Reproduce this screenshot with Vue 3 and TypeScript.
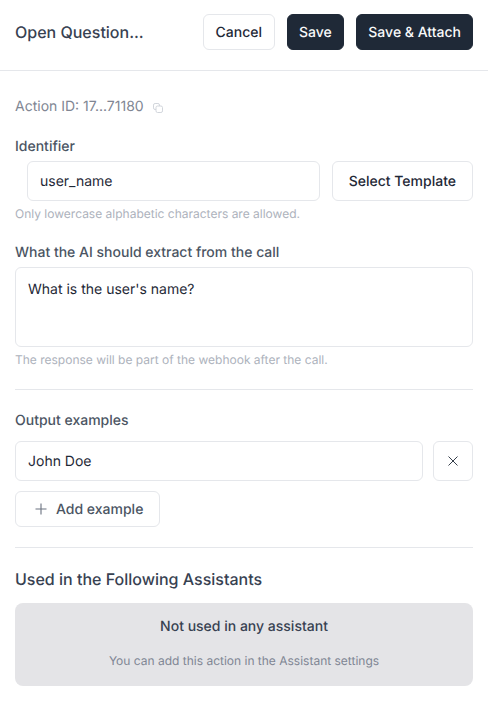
<script setup lang="ts">
const title: string = 'Open Question...'
</script>

<template>
  <div class="page">
    <header class="head">
      <div class="title">{{ title }}</div>
      <div class="actions">
        <button class="btn outline mid">Cancel</button>
        <button class="btn dark mid">Save</button>
        <button class="btn dark">Save &amp; Attach</button>
      </div>
    </header>
    <main class="body">
      <div class="action-id">
        <span>Action ID: 17...71180</span>
        <svg class="copy" width="10" height="10" viewBox="0 0 10 10" fill="none" stroke="#d1d5db" stroke-width="1">
          <rect x="0.5" y="0.5" width="6" height="6" rx="1.6" />
          <rect x="3" y="3" width="6.5" height="6.5" rx="1.6" fill="#fff" />
        </svg>
      </div>

      <label class="label id-label">Identifier</label>
      <div class="id-row">
        <div class="field grow">user_name</div>
        <button class="btn outline tall tmpl">Select Template</button>
      </div>
      <p class="hint id-hint">Only lowercase alphabetic characters are allowed.</p>

      <label class="label extract">What the AI should extract from the call</label>
      <div class="field area">What is the user's name?</div>
      <p class="hint">The response will be part of the webhook after the call.</p>

      <hr class="rule first" />

      <label class="label">Output examples</label>
      <div class="ex-row">
        <div class="field grow">John Doe</div>
        <button class="icon-btn" aria-label="Remove">
          <svg width="16" height="16" viewBox="0 0 16 16" fill="none" stroke="#1f2937" stroke-width="0.9">
            <path d="M3.5 3.5 12.5 12.5M12.5 3.5 3.5 12.5" />
          </svg>
        </button>
      </div>
      <button class="btn outline add">
        <svg width="14" height="14" viewBox="0 0 14 14" fill="none" stroke="#6b7280" stroke-width="1.1">
          <path d="M7 1.5V12.5M1.5 7H12.5" />
        </svg>
        <span>Add example</span>
      </button>

      <hr class="rule second" />

      <h2 class="section">Used in the Following Assistants</h2>
      <div class="empty">
        <div class="empty-title">Not used in any assistant</div>
        <div class="empty-sub">You can add this action in the Assistant settings</div>
      </div>
    </main>
  </div>
</template>

<style>
html, body { margin: 0; background: #fff; }
</style>

<style scoped>
.page {
  width: 488px;
  height: 702px;
  overflow: hidden;
  font-family: Inter, "Liberation Sans", sans-serif;
  text-rendering: geometricPrecision;
  color: #1f2937;
  box-sizing: border-box;
}
.head {
  height: 71px;
  box-sizing: border-box;
  border-bottom: 1px solid #e5e7eb;
  padding: 14px 15px 0;
  display: flex;
  justify-content: space-between;
  align-items: flex-start;
}
.title {
  font-size: 16px;
  font-weight: 500;
  line-height: 36px;
  color: #374151;
}
.actions { display: flex; gap: 12px; }
.btn {
  font-family: inherit;
  text-rendering: inherit;
  font-size: 14px;
  font-weight: 500;
  height: 36px;
  padding: 0 11px;
  border-radius: 6px;
  box-sizing: border-box;
  cursor: pointer;
}
.mid { padding: 0 11.5px; }
.outline { background: #fff; border: 1px solid #e5e7eb; color: #1f2937; }
.dark { background: #1f2937; border: 1px solid #1f2937; color: #f9fafb; }
.body { padding: 0 15px; }
.action-id {
  margin-top: 27px;
  display: flex;
  align-items: center;
  gap: 9px;
  font-size: 14px;
  line-height: 18px;
  color: #808693;
}
.copy { margin-top: 1px; }
.label {
  display: block;
  font-size: 14px;
  font-weight: 500;
  line-height: 20px;
  color: #4b5563;
}
.id-label { margin-top: 21px; }
.id-row { display: flex; gap: 12px; margin-top: 4px; padding-left: 12px; }
.ex-row { display: flex; gap: 10px; margin-top: 10px; }
.field {
  box-sizing: border-box;
  height: 40px;
  border: 1px solid #e5e7eb;
  border-radius: 6px;
  padding: 0 12px;
  font-size: 14px;
  line-height: 40px;
  color: #1f2937;
  background: #fff;
}
.grow { flex: 1; min-width: 0; }
.tall { height: 40px; }
.tmpl { padding: 0 16px; }
.hint {
  margin: 6px 0 0;
  font-size: 12px;
  line-height: 14px;
  color: #adb2bc;
}
.id-hint { margin-top: 6px; }
.extract { margin-top: 22px; }
.area {
  height: 80px;
  margin-top: 4px;
  line-height: 20px;
  padding: 12px 12px;
}
.rule { border: 0; border-top: 1px solid #e5e7eb; margin: 0; }
.first { margin-top: 22px; margin-bottom: 21px; }
.icon-btn {
  width: 40px;
  height: 40px;
  box-sizing: border-box;
  border: 1px solid #e5e7eb;
  border-radius: 6px;
  background: #fff;
  display: flex;
  align-items: center;
  justify-content: center;
  padding: 0;
}
.add {
  margin-top: 10px;
  display: flex;
  align-items: center;
  gap: 8px;
  padding: 0 16px 0 18px;
  color: #4b5563;
}
.second { margin-top: 20px; }
.section {
  margin: 20px 0 0;
  font-size: 16px;
  font-weight: 500;
  line-height: 22px;
  color: #374151;
}
.empty {
  margin-top: 13px;
  height: 83px;
  border-radius: 8px;
  background: #e4e4e7;
  text-align: center;
  box-sizing: border-box;
  padding-top: 14px;
}
.empty-title { font-size: 14px; font-weight: 500; line-height: 20px; color: #374151; }
.empty-sub { margin-top: 16px; font-size: 12px; line-height: 16px; color: #7f8694; }
</style>
